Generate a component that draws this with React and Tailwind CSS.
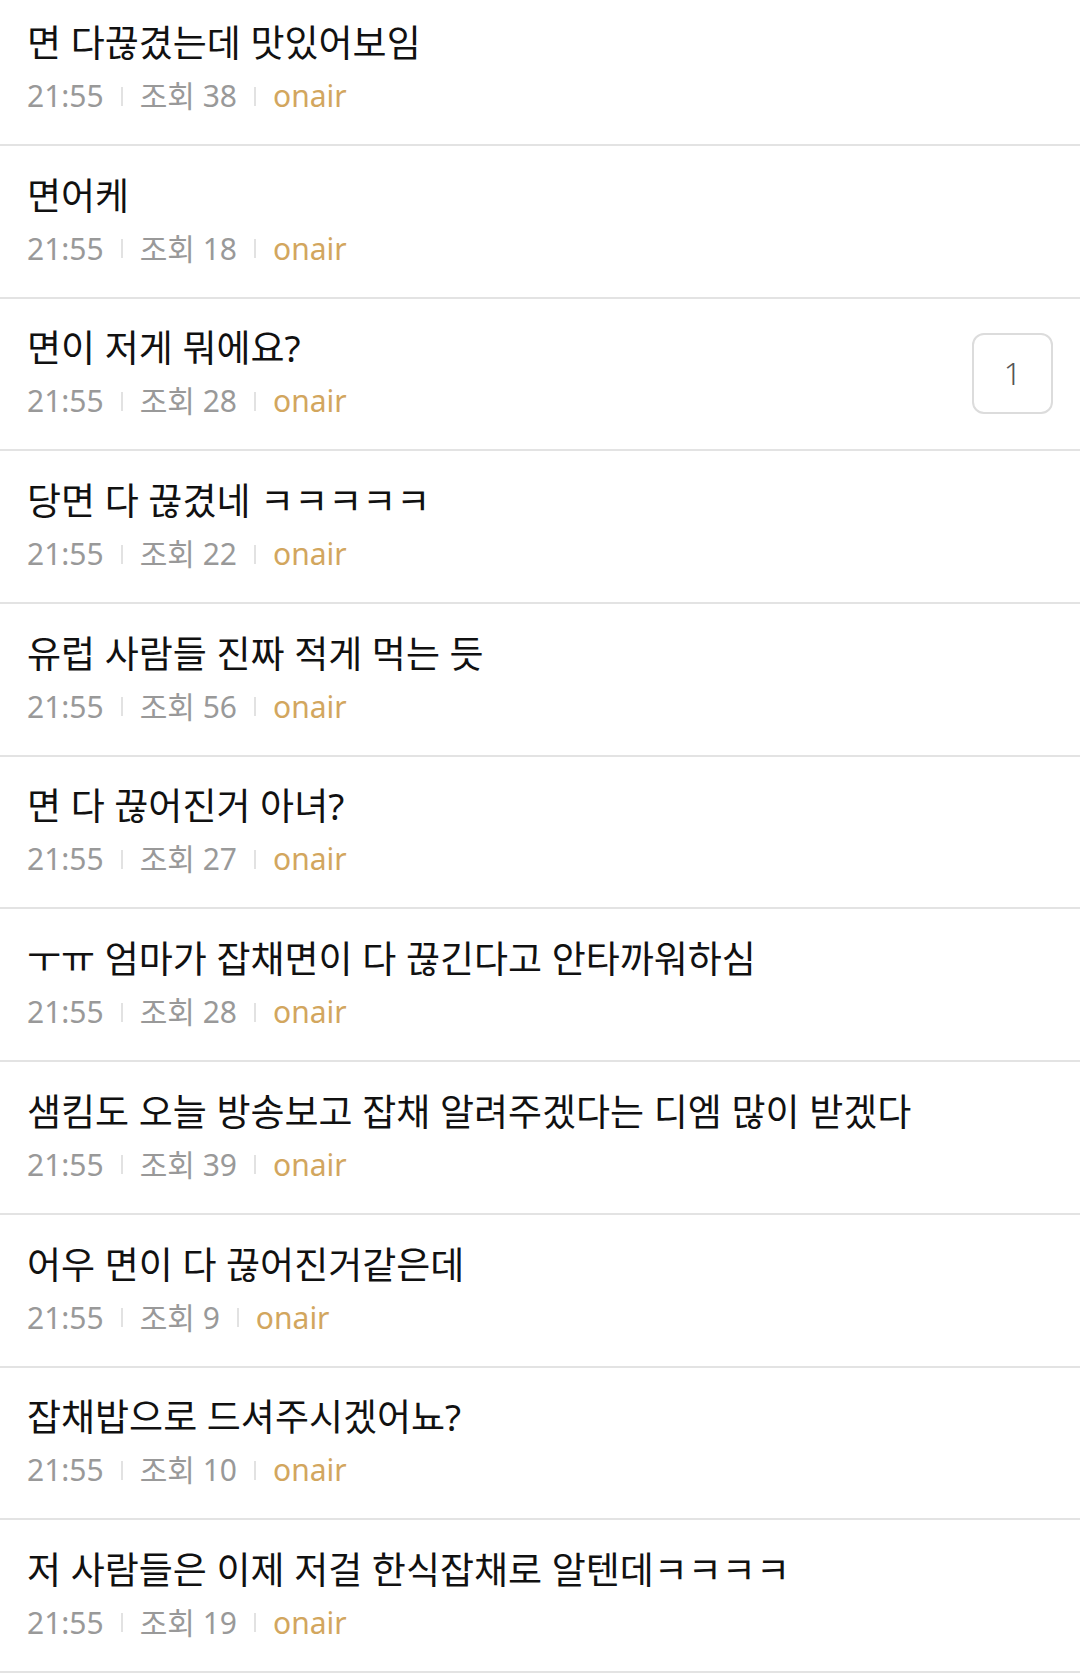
const posts = [
  { title: "면 다끊겼는데 맛있어보임", views: 38 },
  { title: "면어케", views: 18 },
  { title: "면이 저게 뭐에요?", views: 28, comments: 1 },
  { title: "당면 다 끊겼네 ㅋㅋㅋㅋㅋ", views: 22 },
  { title: "유럽 사람들 진짜 적게 먹는 듯", views: 56 },
  { title: "면 다 끊어진거 아녀?", views: 27 },
  { title: "ㅜㅠ 엄마가 잡채면이 다 끊긴다고 안타까워하심", views: 28 },
  { title: "샘킴도 오늘 방송보고 잡채 알려주겠다는 디엠 많이 받겠다", views: 39 },
  { title: "어우 면이 다 끊어진거같은데", views: 9 },
  { title: "잡채밥으로 드셔주시겠어뇨?", views: 10 },
  { title: "저 사람들은 이제 저걸 한식잡채로 알텐데ㅋㅋㅋㅋ", views: 19 },
]

function Divider() {
  return <span className="mx-[17px] inline-block h-[19px] w-[2px] bg-[#e2e2e2]" />
}

function PostRow({ post, first }) {
  return (
    <li
      className={`flex items-center justify-between border-b-2 border-[#e3e3e3] px-[27px] pb-[8px] ${
        first ? "h-[146px] pt-0" : "h-[152.7px] pt-[6.7px]"
      }`}
    >
      <div className="flex flex-col">
        <p className="text-[37px] leading-[46px] text-[#111]">{post.title}</p>
        <div className="mt-[10px] flex items-center text-[30px] leading-[40px] text-[#999]">
          <span>21:55</span>
          <Divider />
          <span>조회 {post.views}</span>
          <Divider />
          <span className="text-[#d2a65e]">onair</span>
        </div>
      </div>

      {post.comments && (
        <div className="flex h-[81px] w-[81px] items-center justify-center rounded-[12px] border-2 border-[#dcdcdc] text-[31px] font-light text-[#555]">
          {post.comments}
        </div>
      )}
    </li>
  )
}

export default function App() {
  return (
    <div className="min-h-screen bg-white font-['Noto_Sans','Noto_Sans_CJK_KR',sans-serif]">
      <ul>
        {posts.map((post, i) => (
          <PostRow key={i} post={post} first={i === 0} />
        ))}
      </ul>
    </div>
  )
}
